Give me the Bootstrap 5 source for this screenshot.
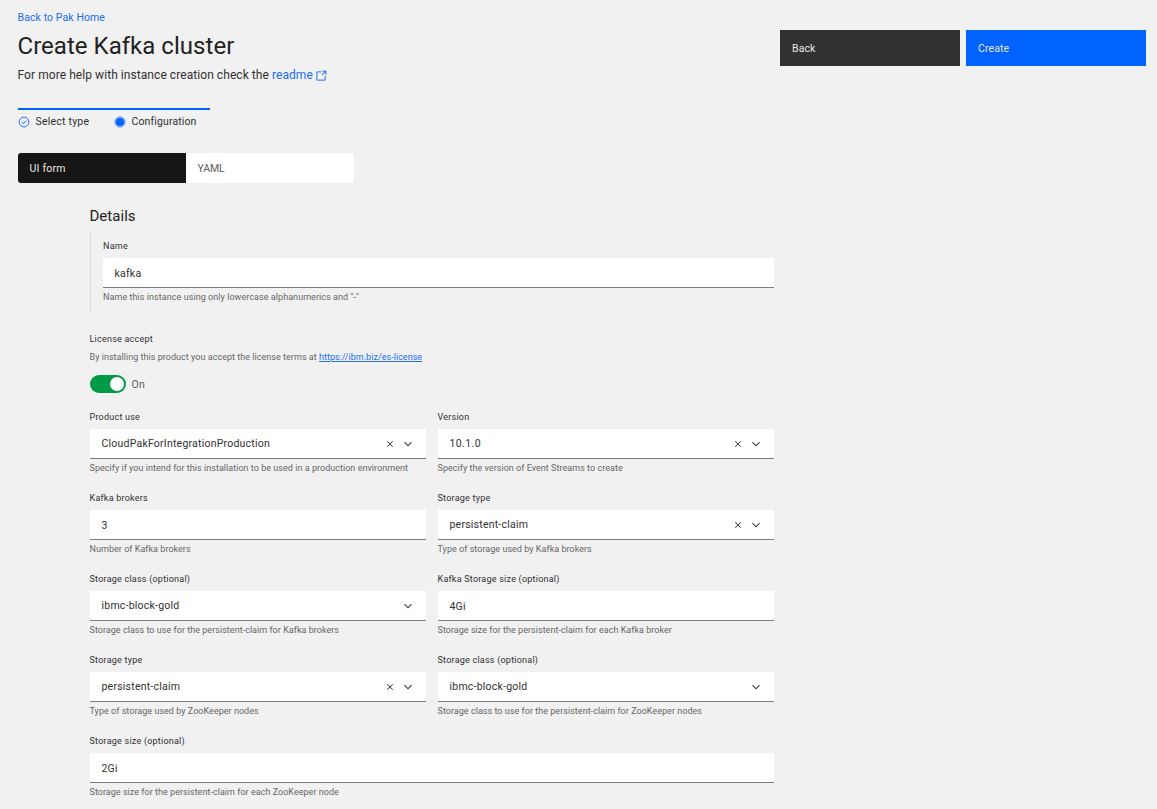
<!DOCTYPE html>
<html lang="en">
<head>
<meta charset="utf-8">
<meta name="viewport" content="width=device-width, initial-scale=1">
<title>Create Kafka cluster</title>
<link href="https://cdn.jsdelivr.net/npm/bootstrap@5.3.0/dist/css/bootstrap.min.css" rel="stylesheet">
<style>
body{background:#f1f1f1;color:#303030;font-family:Roboto,"Liberation Sans",sans-serif;font-size:10.5px;line-height:14px;letter-spacing:.22px;overflow:hidden}
a{color:#1a6cf5}
.page{padding:11px 11px 0 18px}
.home-link{letter-spacing:.09px;margin-left:-.5px}
.page-title{font-size:24px;line-height:30px;font-weight:400;color:#222;margin:6px 0 5px -.5px;letter-spacing:.03px}
.intro{font-size:12px;line-height:18px;letter-spacing:.065px;margin-left:-.5px}
.actions{gap:6px;padding-top:19px}
.action,.action:hover{width:180px;height:36px;border:0;border-radius:0;padding:1px 12px 0;font-size:10.5px;text-align:left;color:#e8e8e8;letter-spacing:.1px}
.action-dark{background:#323232}
.action-blue{background:#0062ff}
.steps{width:192px;margin-top:24px;border-top:2px solid #0062ff;padding-top:5px}
.step{width:96px;height:14px}
.step svg{flex:none;margin-right:5.5px}
.step:last-child{letter-spacing:.13px}
.switcher{width:336px;height:30px;border-radius:3px;overflow:hidden;margin-top:24px}
.switcher button{width:168px;border:0;padding:1px 11.5px 0;text-align:left;background:#fff;color:#5c5c5c;letter-spacing:.22px}
.switcher button:last-child{letter-spacing:-.1px}
.switcher button.active{background:#161616;color:#e8e8e8}
.form-area{width:684px;margin-left:72px;padding-top:22px}
.form-area h2{font-size:15px;line-height:22px;font-weight:400;color:#222;margin:0 0 4px -.5px;letter-spacing:.03px}
.name-group{border-left:1px solid #dcdcdc;padding:9px 0 9px 12px;margin-bottom:21px}
.flabel{font-size:9px;line-height:12px;letter-spacing:.23px;margin-left:-.5px}
.fbox{height:30px;background:#fff;border-bottom:1px solid #7c7c7c;margin:6px 0 3px;padding:0 12px 0 11.5px}
.fbox.plain{padding-top:2px}
.fhelp{font-size:9px;line-height:12px;color:#666;letter-spacing:.035px;margin-left:-.5px;white-space:nowrap}
.name-group .fhelp{letter-spacing:.06px;margin-left:0}
.name-group .flabel{margin-left:0}
.license-note{margin-top:6px}
.license-toggle{margin:12px 0 18px;color:#5c5c5c}
.license-toggle span:last-child{padding:2px 0 0 5.5px}
.toggle{width:36px;height:18px;border-radius:9px;background:#009a48;padding:2px}
.toggle i{width:14px;height:14px;border-radius:50%;background:#fff}
.fields{--bs-gutter-x:12px;--bs-gutter-y:18px}
.version{letter-spacing:.4px}
.ic{gap:6px}
.launch{margin:2px 0 0 2px}
</style>
</head>
<body>
<svg class="d-none">
<symbol id="x" viewBox="0 0 32 32"><path d="M24 9.4 22.6 8 16 14.6 9.4 8 8 9.4l6.6 6.6L8 22.6 9.4 24l6.6-6.6 6.6 6.6 1.4-1.4-6.6-6.6L24 9.4z" fill="#262626"/></symbol>
<symbol id="down" viewBox="0 0 16 16"><path d="M8 11 3 6l.7-.7L8 9.6l4.3-4.3.7.7z" fill="#161616" stroke="#161616" stroke-width=".3"/></symbol>
</svg>
<main class="page">
<header class="d-flex justify-content-between">
<div>
<a class="home-link d-block text-decoration-none" href="#">Back to Pak Home</a>
<h1 class="page-title">Create Kafka cluster</h1>
<div class="intro d-flex align-items-center">For more help with instance creation check the&nbsp;<a class="d-flex align-items-center text-decoration-none" href="#">readme<svg class="launch" width="12" height="12" viewBox="0 0 32 32" fill="#1a6cf5" stroke="#1a6cf5" stroke-width=".5"><path d="M26 28H6a2 2 0 0 1-2-2V6a2 2 0 0 1 2-2h10v2H6v20h20V16h2v10a2 2 0 0 1-2 2z"/><path d="M20 2v2h6.6L18 12.6l1.4 1.4L28 5.4V12h2V2z"/></svg></a></div>
</div>
<div class="actions d-flex"><button class="btn action action-dark">Back</button><button class="btn action action-blue">Create</button></div>
</header>

<div class="steps d-flex">
<div class="step d-flex align-items-center"><svg width="12" height="12" viewBox="0 0 12 12" fill="none" stroke="#0f62fe"><circle cx="6" cy="6" r="4.9" stroke-width=".9"/><path d="M3.8 6.1l1.6 1.5 2.9-3" stroke-width="1"/></svg>Select type</div>
<div class="step d-flex align-items-center"><svg width="12" height="12" viewBox="0 0 12 12"><circle cx="6" cy="6" r="5" fill="none" stroke="#0f62fe" stroke-width=".8"/><circle cx="6" cy="6" r="4.1" fill="#0062ff"/></svg>Configuration</div>
</div>

<div class="switcher d-flex"><button class="active">UI form</button><button>YAML</button></div>

<section class="form-area">
<h2>Details</h2>
<div class="name-group">
<div class="flabel">Name</div><div class="fbox plain d-flex align-items-center">kafka</div><div class="fhelp">Name this instance using only lowercase alphanumerics and "-"</div>
</div>
<div class="flabel">License accept</div>
<div class="fhelp license-note">By installing this product you accept the license terms at <a href="#">https://ibm.biz/es-license</a></div>
<div class="license-toggle d-flex align-items-center"><span class="toggle d-flex justify-content-end"><i></i></span><span>On</span></div>

<div class="fields row">
<div class="col-6"><div class="flabel">Product use</div><div class="fbox d-flex align-items-center justify-content-between">CloudPakForIntegrationProduction<span class="ic d-flex"><svg width="12" height="12"><use href="#x"/></svg><svg width="12" height="12"><use href="#down"/></svg></span></div><div class="fhelp">Specify if you intend for this installation to be used in a production environment</div></div>
<div class="col-6"><div class="flabel">Version</div><div class="fbox d-flex align-items-center justify-content-between"><span class="version">10.1.0</span><span class="ic d-flex"><svg width="12" height="12"><use href="#x"/></svg><svg width="12" height="12"><use href="#down"/></svg></span></div><div class="fhelp">Specify the version of Event Streams to create</div></div>
<div class="col-6"><div class="flabel">Kafka brokers</div><div class="fbox plain d-flex align-items-center">3</div><div class="fhelp">Number of Kafka brokers</div></div>
<div class="col-6"><div class="flabel">Storage type</div><div class="fbox d-flex align-items-center justify-content-between">persistent-claim<span class="ic d-flex"><svg width="12" height="12"><use href="#x"/></svg><svg width="12" height="12"><use href="#down"/></svg></span></div><div class="fhelp">Type of storage used by Kafka brokers</div></div>
<div class="col-6"><div class="flabel">Storage class (optional)</div><div class="fbox d-flex align-items-center justify-content-between">ibmc-block-gold<span class="ic d-flex"><svg width="12" height="12"><use href="#down"/></svg></span></div><div class="fhelp">Storage class to use for the persistent-claim for Kafka brokers</div></div>
<div class="col-6"><div class="flabel">Kafka Storage size (optional)</div><div class="fbox plain d-flex align-items-center">4Gi</div><div class="fhelp">Storage size for the persistent-claim for each Kafka broker</div></div>
<div class="col-6"><div class="flabel">Storage type</div><div class="fbox d-flex align-items-center justify-content-between">persistent-claim<span class="ic d-flex"><svg width="12" height="12"><use href="#x"/></svg><svg width="12" height="12"><use href="#down"/></svg></span></div><div class="fhelp">Type of storage used by ZooKeeper nodes</div></div>
<div class="col-6"><div class="flabel">Storage class (optional)</div><div class="fbox d-flex align-items-center justify-content-between">ibmc-block-gold<span class="ic d-flex"><svg width="12" height="12"><use href="#down"/></svg></span></div><div class="fhelp">Storage class to use for the persistent-claim for ZooKeeper nodes</div></div>
<div class="col-12"><div class="flabel">Storage size (optional)</div><div class="fbox plain d-flex align-items-center">2Gi</div><div class="fhelp">Storage size for the persistent-claim for each ZooKeeper node</div></div>
</div>
</section>
</main>
<script src="https://cdn.jsdelivr.net/npm/bootstrap@5.3.0/dist/js/bootstrap.bundle.min.js"></script>
</body>
</html>
